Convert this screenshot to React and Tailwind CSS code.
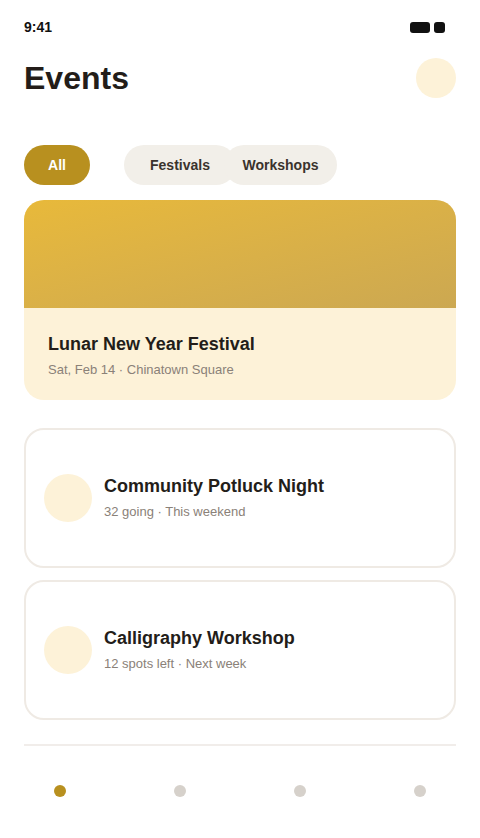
export default function App() {
  const items = [
    { title: "Community Potluck Night", meta: "32 going · This weekend" },
    { title: "Calligraphy Workshop", meta: "12 spots left · Next week" },
  ];

  return (
    <div className="w-[480px] h-[838px] bg-white flex flex-col px-6 font-['Liberation_Sans',Arial,sans-serif] text-[#231d19]">
      {/* status bar */}
      <div className="h-[54px] flex items-center justify-between">
        <span className="text-[14px] font-bold text-[#111]">9:41</span>
        <div className="flex items-center gap-1 mr-[11px]">
          <div className="w-5 h-[11px] rounded-[3px] bg-[#111]" />
          <div className="w-[11px] h-[11px] rounded-[3px] bg-[#111]" />
        </div>
      </div>

      {/* header */}
      <div className="flex items-center justify-between h-[48px]">
        <h1 className="text-[32px] font-bold leading-none">Events</h1>
        <div className="w-10 h-10 rounded-full bg-[#fdf2d8]" />
      </div>

      {/* filter chips */}
      <div className="flex items-center mt-[43px]">
        <button className="h-10 w-[66px] rounded-full bg-[#b8901f] text-white text-[14px] font-bold">
          All
        </button>
        <button className="h-10 w-[112px] ml-[34px] rounded-full bg-[#f2efe9] text-[#3a332d] text-[14px] font-bold">
          Festivals
        </button>
        <button className="h-10 w-[113px] ml-[-12px] rounded-full bg-[#f2efe9] text-[#3a332d] text-[14px] font-bold">
          Workshops
        </button>
      </div>

      {/* featured */}
      <div className="mt-[15px] rounded-[20px] overflow-hidden bg-[#fdf2d8]">
        <div className="h-[108px] bg-linear-to-br from-[#e8b93a] to-[#cca851]" />
        <div className="h-[92px] px-6 pt-[25px]">
          <div className="text-[18px] font-bold leading-tight">Lunar New Year Festival</div>
          <div className="text-[13px] text-[#8a8178] mt-1">Sat, Feb 14 · Chinatown Square</div>
        </div>
      </div>

      {/* list */}
      <div className="mt-7 flex flex-col gap-3">
        {items.map((it) => (
          <div
            key={it.title}
            className="h-[140px] rounded-[20px] border-2 border-[#efeae4] flex items-center px-[18px] gap-3"
          >
            <div className="w-12 h-12 rounded-full bg-[#fdf2d8] shrink-0" />
            <div className="flex flex-col">
              <div className="text-[18px] font-bold leading-tight">{it.title}</div>
              <div className="text-[13px] text-[#8a8178] mt-[5px]">{it.meta}</div>
            </div>
          </div>
        ))}
      </div>

      {/* tab bar */}
      <div className="mt-6 border-t-2 border-[#f1edea]" />
      <div className="-mx-6 h-[90px] grid grid-cols-4 place-items-center">
        <div className="w-3 h-3 rounded-full bg-[#b8901f]" />
        <div className="w-3 h-3 rounded-full bg-[#d6d1cb]" />
        <div className="w-3 h-3 rounded-full bg-[#d6d1cb]" />
        <div className="w-3 h-3 rounded-full bg-[#d6d1cb]" />
      </div>
    </div>
  );
}
